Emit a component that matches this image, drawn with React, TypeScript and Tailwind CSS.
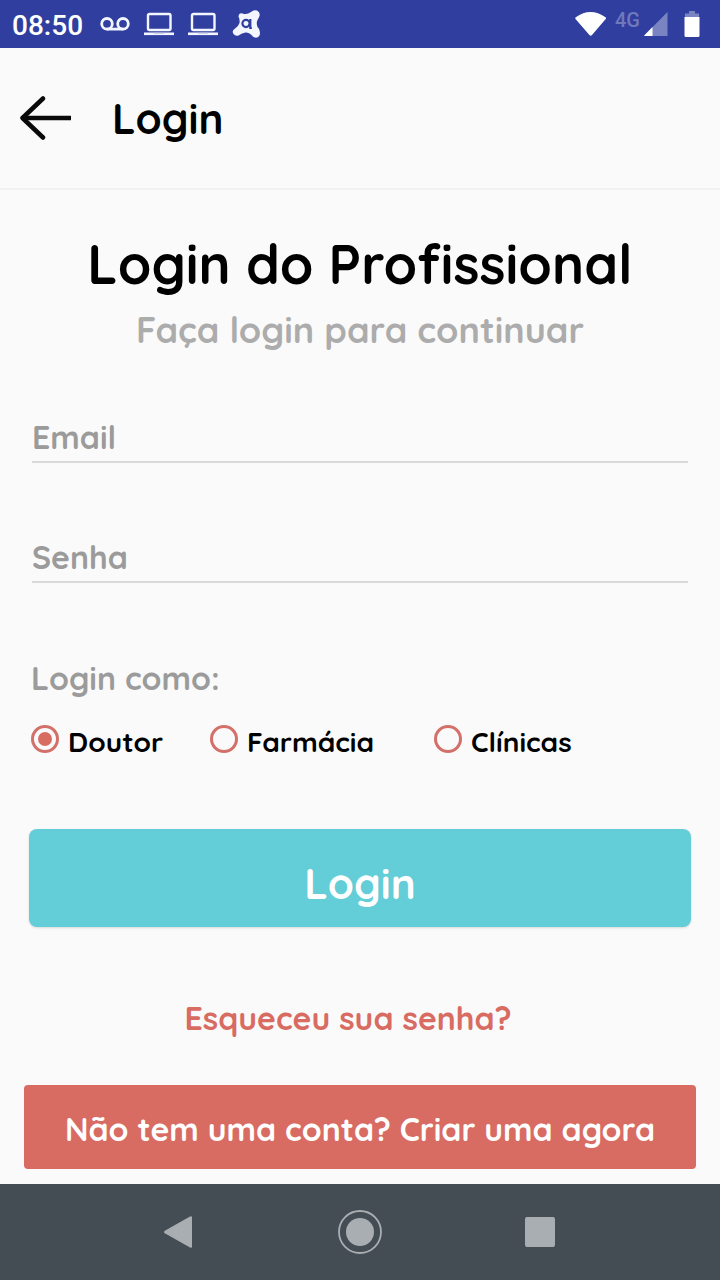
import { useState } from 'react'

const roles = ['Doutor', 'Farmácia', 'Clínicas']

function LaptopIcon() {
    return (
        <svg width="30" height="24" viewBox="0 0 30 24" fill="none" aria-hidden="true">
            <rect x="4" y="2" width="22.5" height="16" rx="1.5" stroke="#f4f6ff" strokeWidth="2.4" />
            <path d="M0 20.5h30v2.6H0z" fill="#f4f6ff" />
            <path d="M10 20.5h10v1H10z" fill="#a9b1dd" />
        </svg>
    )
}

function StatusBar() {
    return (
        <div className="flex h-12 items-center justify-between bg-[#303f9f] pr-5 pl-3 font-[Roboto,sans-serif] text-white">
            <div className="flex items-center">
                <span className="w-[88px] pt-1 text-[28px] leading-8 font-medium">08:50</span>
                <div className="flex items-center gap-[14px]">
                    <svg width="30" height="24" viewBox="0 0 30 24" fill="none" stroke="#f4f6ff" strokeWidth="2.8" aria-hidden="true">
                        <circle cx="7" cy="11.8" r="5.3" />
                        <circle cx="23" cy="11.8" r="5.3" />
                        <path d="M7 17.1h16" />
                    </svg>
                    <LaptopIcon />
                    <LaptopIcon />
                    <svg width="30" height="30" viewBox="0 0 30 30" aria-hidden="true">
                        <path
                            d="M6.5 7.500Q7 3.500 10.500 4.500Q15 6 19 3Q21.500 0.500 25 1.500Q28.500 3.500 27.500 7Q26.500 9.500 25.500 11Q24 14 25.500 18Q28 20 28 23.500Q28 28.500 24 28.800Q21 28.500 19.500 26Q17 23 13.500 23.500Q10 24 6.500 26.500Q3.500 27.500 1.500 25Q-.5 22 2.500 20Q6.500 17.500 7.500 14Q8 10.500 6.500 7.500Z"
                            fill="#f4f6ff"
                        />
                        <circle cx="14" cy="14.500" r="3.600" fill="none" stroke="#303f9f" strokeWidth="2.200" />
                        <path d="M18.300 10v9h1.500" fill="none" stroke="#303f9f" strokeWidth="2.200" />
                    </svg>
                </div>
            </div>
            <div className="flex items-center">
                <svg width="32" height="28" viewBox="0 0 32 28" fill="#fff" aria-hidden="true">
                    <path d="M.8 7.300Q15.500-3.500 30.500 7.300Q31.500 8 30.700 9L17 25Q15.700 26.500 14.400 25L.5 9Q-.2 8 .8 7.300Z" />
                </svg>
                <span className="mr-1 ml-2 h-8 text-[20px] leading-6 font-medium text-[#6f79bc]">4G</span>
                <svg width="24" height="26" viewBox="0 0 24 26" aria-hidden="true">
                    <path d="M23.500 1v24H1Q-.3 25 .7 24Z" fill="#7a84c2" />
                    <path d="M8.500 16v9H1Q-.3 25 .7 24Z" fill="#fff" />
                </svg>
                <svg className="ml-4" width="16" height="28" viewBox="0 0 16 28" aria-hidden="true">
                    <path d="M5 1h6v2.500h4V8H1V3.500h4z" fill="#7a84c2" />
                    <path d="M.5 7h15v18.500Q15.500 27 14 27H2Q.5 27 .5 25.500Z" fill="#fff" />
                </svg>
            </div>
        </div>
    )
}

function Header() {
    return (
        <header className="flex h-[142px] items-center border-b-2 border-[#f1f1f1] px-5">
            <button type="button" aria-label="Voltar">
                <svg width="52" height="44" viewBox="0 0 52 44" fill="none" stroke="#0a0a0a" strokeWidth="4.500" aria-hidden="true">
                    <path d="M51 22H2" />
                    <path d="M23 2.500L2.500 22L23 41.500" strokeLinecap="round" strokeLinejoin="round" />
                </svg>
            </button>
            <span className="ml-10 pt-0.5 text-[42px] leading-[52px] font-bold">Login</span>
        </header>
    )
}

function LoginForm() {
    const [role, setRole] = useState(roles[0])

    return (
        <form className="mt-[61px]" onSubmit={(e) => e.preventDefault()}>
            <div className="flex flex-col gap-[68px] px-2">
                <input
                    type="email"
                    aria-label="Email"
                    placeholder="Email"
                    className="h-[52px] w-full border-b-2 border-[#dadada] pt-0.5 text-[32px] font-bold outline-none placeholder:text-[#9b9b9b]"
                />
                <input
                    type="password"
                    aria-label="Senha"
                    placeholder="Senha"
                    className="h-[52px] w-full border-b-2 border-[#dadada] pt-0.5 text-[32px] font-bold outline-none placeholder:text-[#9b9b9b]"
                />
            </div>

            <fieldset className="mt-[75px] px-[7px]">
                <legend className="text-[32px] leading-10 font-bold text-[#9b9b9b]">Login como:</legend>
                <div className="mt-[26px] grid grid-cols-[179px_224px_1fr]">
                    {roles.map((item) => (
                        <label key={item} className="flex h-9 items-start gap-[9px] text-[28px] leading-9 font-bold">
                            <input
                                type="radio"
                                name="role"
                                value={item}
                                checked={role === item}
                                onChange={() => setRole(item)}
                                className="mt-px grid size-7 shrink-0 appearance-none place-content-center rounded-full border-3 border-[#d4706a] before:size-[14px] before:rounded-full checked:before:bg-[#d86c63]"
                            />
                            {item}
                        </label>
                    ))}
                </div>
            </fieldset>

            <div className="mt-[69px] px-[5px]">
                <button
                    type="submit"
                    className="h-[98px] w-full rounded-lg bg-[#63ced8] pt-3 text-[42px] leading-[52px] font-bold text-white shadow-sm"
                >
                    Login
                </button>
            </div>
        </form>
    )
}

function NavigationBar() {
    return (
        <nav className="mt-auto grid h-24 grid-cols-3 place-items-center bg-[#454d54] px-[12.5%]">
            <button type="button" aria-label="Voltar">
                <svg width="32" height="44" viewBox="0 0 32 44" fill="#a9aeb2" aria-hidden="true">
                    <path d="M28 7.500v29Q28 38.500 26 37.500L.8 23.300Q-.8 22 .8 20.700L26 6.500Q28 5.500 28 7.500Z" />
                </svg>
            </button>
            <button type="button" aria-label="Início">
                <svg width="44" height="44" viewBox="0 0 44 44" aria-hidden="true">
                    <circle cx="22" cy="22" r="21" fill="none" stroke="#a9aeb2" strokeWidth="1.800" />
                    <circle cx="22" cy="22" r="14" fill="#a9aeb2" />
                </svg>
            </button>
            <button type="button" aria-label="Recentes" className="size-[30px] rounded-xs bg-[#a9aeb2]" />
        </nav>
    )
}

export default function App() {
    return (
        <div className="flex min-h-screen flex-col bg-[#fafafa] font-[Quicksand,Inter,sans-serif] text-black">
            <StatusBar />
            <Header />
            <main className="flex flex-col px-6 pt-[42px] pb-[15px]">
                <h1 className="text-center text-[54px] leading-[64px] font-bold">Login do Profissional</h1>
                <p className="mt-[14px] text-center text-[36px] leading-10 font-bold text-[#acacac]">Faça login para continuar</p>

                <LoginForm />

                <a href="#senha" className="mt-[71px] pr-6 text-center text-[32px] leading-10 font-bold text-[#d86c63]">
                    Esqueceu sua senha?
                </a>
                <a
                    href="#criar"
                    className="mt-[47px] flex h-[84px] items-center justify-center rounded-sm bg-[#d86c63] pt-1 text-[32px] leading-10 font-bold text-white"
                >
                    Não tem uma conta? Criar uma agora
                </a>
            </main>
            <NavigationBar />
        </div>
    )
}
